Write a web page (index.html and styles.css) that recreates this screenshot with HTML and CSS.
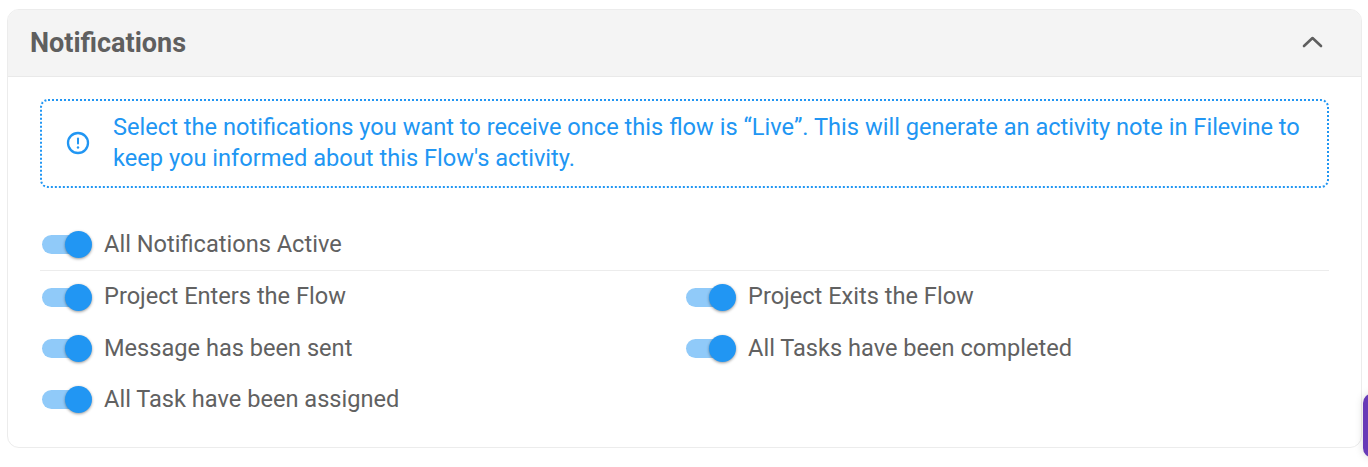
FILE: index.html
```html
<!DOCTYPE html>
<html lang="en">
<head>
    <meta charset="UTF-8">
    <meta name="viewport" content="width=device-width, initial-scale=1.0">
    <title>Notifications</title>
    <link rel="stylesheet" href="styles.css">
</head>
<body>

<div class="card">
    <div class="card-header">
        <h2>Notifications</h2>
        <svg class="chevron" width="24" height="24" viewBox="0 0 24 24"><path d="M3 15 11.500 7 20 15" fill="none" stroke="#5f5f5f" stroke-width="2.600" stroke-linecap="round" stroke-linejoin="round"/></svg>
    </div>
    <div class="card-body">
        <div class="banner">
            <svg class="info-icon" width="24" height="24" viewBox="0 0 24 24">
                <circle cx="12" cy="12" r="10" fill="none" stroke="#2196f3" stroke-width="2.300"/>
                <rect x="11" y="6.500" width="2" height="7" rx="1" fill="#2196f3"/>
                <circle cx="12" cy="16.500" r="1.200" fill="#2196f3"/>
            </svg>
            <p>Select the notifications you want to receive once this flow is “Live”. This will generate an activity note in Filevine to keep you informed about this Flow's activity.</p>
        </div>

        <div class="all-row">
            <label class="toggle-row"><span class="switch"></span><span class="toggle-text">All Notifications Active</span></label>
        </div>

        <div class="toggle-grid">
            <label class="toggle-row top-row"><span class="switch"></span><span class="toggle-text">Project Enters the Flow</span></label>
            <label class="toggle-row top-row"><span class="switch"></span><span class="toggle-text">Project Exits the Flow</span></label>
            <label class="toggle-row"><span class="switch"></span><span class="toggle-text">Message has been sent</span></label>
            <label class="toggle-row"><span class="switch"></span><span class="toggle-text">All Tasks have been completed</span></label>
            <label class="toggle-row"><span class="switch"></span><span class="toggle-text">All Task have been assigned</span></label>
        </div>
    </div>
</div>

<div class="side-tab"></div>

</body>
</html>
```

FILE: styles.css
```css
body {
    font-family: Roboto, Arial, sans-serif;
    background-color: #fff;
    margin: 0;
    padding: 9px 6px 0 7px;
    overflow: hidden;
}
.card {
    width: 1355px;
    height: 439px;
    box-sizing: border-box;
    border: 1px solid #ececec;
    border-radius: 12px;
    overflow: hidden;
}
.card-header {
    display: flex;
    align-items: center;
    justify-content: space-between;
    height: 67px;
    box-sizing: border-box;
    padding: 0 36px 0 22px;
    background-color: #f4f4f4;
    border-bottom: 1px solid #e9e9e9;
}
.card-header h2 {
    margin: 0;
    font-size: 27px;
    font-weight: 700;
    color: #5f5f5f;
}
.card-body {
    padding: 22px 32px 0;
}
.banner {
    display: flex;
    align-items: center;
    gap: 23px;
    height: 89px;
    box-sizing: border-box;
    padding: 0 24px 2px;
    border: 2px dotted #2196f3;
    border-radius: 8px;
    color: #2196f3;
    font-size: 23.64px;
    line-height: 31px;
}
.banner p {
    margin: 0;
}
.info-icon {
    flex: none;
}
.all-row {
    margin-top: 31px;
    border-bottom: 1px solid #ececec;
}
.toggle-row {
    display: flex;
    align-items: center;
    gap: 14px;
    height: 51px;
    font-size: 23.6px;
    color: #616161;
}
.toggle-text {
    margin-top: -2px;
}
.top-row .toggle-text {
    margin-top: -4px;
}
.toggle-grid {
    display: grid;
    grid-template-columns: 644px 1fr;
    padding-top: 1px;
}
.switch {
    position: relative;
    display: block;
    width: 48px;
    height: 19px;
    margin-left: 2px;
    border-radius: 10px;
    background-color: #90caf9;
}
.switch::after {
    content: "";
    position: absolute;
    right: -2px;
    top: -4px;
    width: 27px;
    height: 27px;
    border-radius: 50%;
    background-color: #2196f3;
    box-shadow: 0 1px 3px rgba(0, 0, 0, 0.4);
}
.side-tab {
    position: absolute;
    left: 1363px;
    top: 393px;
    width: 20px;
    height: 65px;
    border-radius: 10px;
    background-color: #673ab7;
    box-shadow: 0 0 8px rgba(0, 0, 0, 0.15);
}
```
